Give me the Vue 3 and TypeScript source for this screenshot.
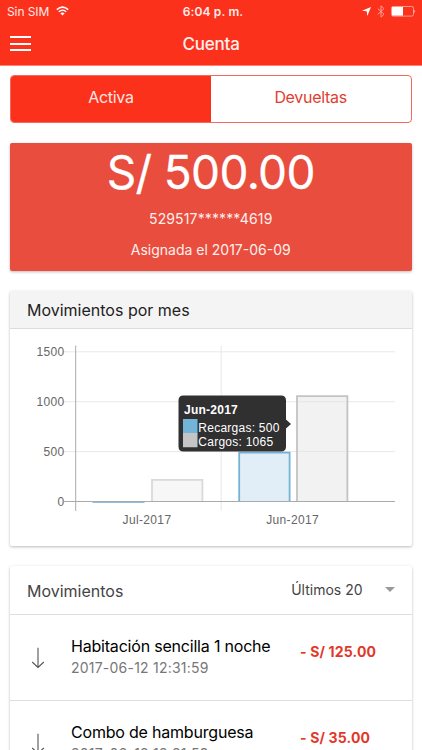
<script setup lang="ts">
interface Bar { x: number; value: number; stroke: string; fill: string }
interface Movement { title: string; date: string; amount: string }

const ticks: number[] = [1500, 1000, 500]
const baseline = 172.5
const yFor = (value: number): number => baseline - value * 0.0998

const bars: Bar[] = [
  { x: 142, value: 216, stroke: '#d9d9d9', fill: '#f7f7f7' },
  { x: 229.2, value: 490, stroke: '#72b2d5', fill: '#e2eef7' },
  { x: 287, value: 1055, stroke: '#c3c3c3', fill: '#f2f2f2' },
]
const barPath = (bar: Bar): string =>
  `M${bar.x} ${baseline}V${yFor(bar.value)}h50.4V${baseline}`

const movements: Movement[] = [
  { title: 'Habitación sencilla 1 noche', date: '2017-06-12 12:31:59', amount: '- S/ 125.00' },
  { title: 'Combo de hamburguesa', date: '2017-06-12 12:31:59', amount: '- S/ 35.00' },
]
</script>

<template>
  <main class="screen">
    <header class="top">
      <div class="status">
        <div class="carrier">
          <span>Sin SIM</span>
          <svg class="wifi" width="13" height="10" viewBox="0 0 13 10" fill="none" stroke="#fff" stroke-width="1.5">
            <path d="M.8 3.6Q6.5-1.4 12.2 3.6M2.8 5.8Q6.5 2.6 10.2 5.8" />
            <path d="M4.3 7.3Q6.5 5.7 8.7 7.3L6.5 9.6Z" fill="#fff" stroke="none" />
          </svg>
        </div>
        <span class="time">6:04 p. m.</span>
        <div class="indicators">
          <svg width="9" height="9" viewBox="0 0 9 9"><path d="M9 0 5.3 9 4.7 4.3 0 3.8Z" fill="#fff" /></svg>
          <svg class="bluetooth" width="8" height="13" viewBox="0 0 8 13" fill="none" stroke="#ffa096" stroke-width="1">
            <path d="M.7 3.5 7 9.3 4 12.2V.8L7 3.7.7 9.5" />
          </svg>
          <svg class="battery" width="25" height="11" viewBox="0 0 25 11">
            <rect x=".5" y=".5" width="22" height="9.6" rx="1.6" fill="none" stroke="#ff9a90" />
            <path d="M1 1h11v8.6H1z" fill="#fff" /><path d="M23.5 3.5q1.5 1.8 0 3.6z" fill="#fff" />
          </svg>
        </div>
      </div>
      <nav class="nav">
        <button class="menu" aria-label="Menú"><i></i><i></i><i></i></button>
        <h1>Cuenta</h1>
        <span></span>
      </nav>
    </header>

    <div class="content">
      <div class="segments">
        <button class="segment active">Activa</button>
        <button class="segment">Devueltas</button>
      </div>

      <section class="balance">
        <strong>S/ 500.00</strong>
        <p class="number">529517******4619</p>
        <p class="assigned">Asignada el 2017-06-09</p>
      </section>

      <section class="card chart-card">
        <h2>Movimientos por mes</h2>
        <svg class="chart" width="401" height="217" viewBox="0 0 401 217">
          <g stroke="#e8e8e8">
            <path v-for="tick in ticks" :key="tick" :d="`M54 ${yFor(tick)}H385`" />
            <path d="M211.2 16.5V182" />
          </g>
          <path d="M82.5 173H134.5" stroke="#8fc0df" stroke-width="2" />
          <path v-for="bar in bars" :key="bar.x" :d="barPath(bar)" :stroke="bar.stroke" :fill="bar.fill" stroke-width="1.8" />
          <g stroke="#e0e0e0" stroke-opacity=".6"><path d="M288 122.5h48.5M288 72.7h48.5" /></g>
          <path d="M65.7 16.5V182M54 172.5H385" fill="none" stroke="#aaa" />
          <g class="labels">
            <text v-for="tick in ticks" :key="tick" x="54.5" :y="yFor(tick) + 4.2" text-anchor="end">{{ tick }}</text>
            <text x="54.5" y="176.7" text-anchor="end">0</text>
            <text x="137" y="195" text-anchor="middle">Jul-2017</text>
            <text x="282.6" y="195" text-anchor="middle">Jun-2017</text>
          </g>
          <path d="M173.5 66.5H271Q276 66.5 276 71.5V90.5L281 95 276 99.5V117.5Q276 122.5 271 122.5H173.5Q168.5 122.5 168.5 117.5V71.5Q168.5 66.5 173.5 66.5Z" fill="#303030" />
          <path d="M173 90h14.5v14H173z" fill="#72b5d8" /><path d="M173 104h14.5v14.3H173z" fill="#c5c5c5" />
          <g class="tip">
            <text class="tip-title" x="174" y="84.5">Jun-2017</text>
            <text x="188.3" y="103">Recargas: 500</text>
            <text x="188.3" y="117">Cargos: 1065</text>
          </g>
        </svg>
      </section>

      <section class="card movements">
        <div class="list-head">
          <h2>Movimientos</h2>
          <button class="select">Últimos 20 <i></i></button>
        </div>
        <article v-for="item in movements" :key="item.title" class="row">
          <svg width="14" height="22" viewBox="0 0 14 22" fill="none" stroke="#555" stroke-width="1.1">
            <path d="M7 .7V20.5M1.2 15 7 20.5 12.8 15" />
          </svg>
          <div class="description"><h3>{{ item.title }}</h3><p>{{ item.date }}</p></div>
          <span class="amount">{{ item.amount }}</span>
        </article>
      </section>
    </div>
  </main>
</template>

<style>
body { margin: 0; overflow: hidden; background: #fff; }
</style>

<style scoped>
* { box-sizing: border-box; }
h1, h2, h3, p { margin: 0; font-weight: 400; white-space: nowrap; }
button { border: 0; padding: 0; background: none; font: inherit; color: inherit; letter-spacing: inherit; }
.screen { width: 422px; height: 750px; overflow: hidden; background: #fff; font-family: Inter, "Liberation Sans", sans-serif; }
.top { height: 66px; background: #fb311c; border-bottom: 1px solid #ff8175; color: #fff; }
.status { height: 22px; display: grid; grid-template-columns: 1fr auto 1fr; align-items: center; padding: 0 6px 0 7px; font-size: 12px; }
.carrier { display: flex; align-items: center; gap: 7px; letter-spacing: -.1px; color: #ffe9e7; }
.time { padding-left: 3px; font-weight: 600; letter-spacing: .15px; color: #ffebe9; }
.indicators { display: flex; align-items: center; justify-content: flex-end; }
.bluetooth { margin: 0 6px 0 6px; }
.nav { height: 43px; display: grid; grid-template-columns: 1fr auto 1fr; align-items: center; padding: 0 10px; }
.menu { width: 21px; display: grid; gap: 4.5px; }
.menu i { height: 2px; background: #fff; }
h1 { font-size: 17px; font-weight: 500; color: #fff0ee; letter-spacing: -.2px; }
.content { padding: 9px 10.5px 0 10px; display: flex; flex-direction: column; }
.segments { height: 48px; display: flex; border: 1px solid #f2695d; border-radius: 4px; overflow: hidden; font-size: 16px; letter-spacing: -.3px; }
.segment { flex: 1; padding-bottom: 4px; color: #df3e30; }
.active { background: #fb311c; color: #ffe6e3; }
.balance { height: 128px; margin-top: 20px; border-radius: 2px; background: #e84d3d; color: #fff; text-align: center; box-shadow: 0 1px 3px #0004; display: flex; flex-direction: column; align-items: center; }
.balance strong { height: 59px; line-height: 59px; font-size: 46px; font-weight: 400; letter-spacing: -.65px; -webkit-text-stroke: .3px #fff; }
.balance p { font-size: 14px; color: #fff0ee; }
.balance .number { line-height: 20px; margin-top: 7px; letter-spacing: .13px; }
.assigned { line-height: 20px; margin-top: 11px; }
.card { margin-top: 20px; background: #fff; border-radius: 2px; box-shadow: 0 1px 3px #0004; }
.chart-card { height: 255px; overflow: hidden; }
.chart-card h2 { height: 38px; line-height: 38px; padding-left: 17px; background: #f4f4f4; border-bottom: 1px solid #ddd; font-size: 16px; color: #222; }
.chart { display: block; }
.labels { font: 12px "Liberation Sans", Arial, sans-serif; fill: #666; letter-spacing: .35px; }
.tip { font: 12px "Liberation Sans", Arial, sans-serif; fill: #fff; letter-spacing: .25px; }
.tip-title { font-weight: 700; }
.movements { height: 200px; }
.list-head { height: 49px; display: flex; justify-content: space-between; align-items: center; padding: 0 17px; border-bottom: 1px solid #dedede; color: #444; }
.list-head h2 { font-size: 16px; padding-top: 2px; }
.select { display: flex; align-items: center; gap: 22px; font-size: 14px; padding-bottom: 1px; }
.select i { border: 5px solid transparent; border-top-color: #999; border-bottom: 0; }
.row { height: 86px; display: grid; grid-template-columns: 40px 230px 1fr; align-items: start; padding: 0 20px 0 21px; border-bottom: 1px solid #dedede; }
.row svg { margin-top: 32px; }
.description { padding-top: 20px; }
h3 { font-size: 16px; line-height: 22px; color: #000; letter-spacing: -.2px; }
.description p { font-size: 14px; line-height: 22px; color: #777; letter-spacing: .22px; }
.amount { margin: 27px 0 0 -1px; line-height: 20px; font-size: 14px; font-weight: 700; color: #e33729; white-space: nowrap; letter-spacing: .15px; }
</style>
